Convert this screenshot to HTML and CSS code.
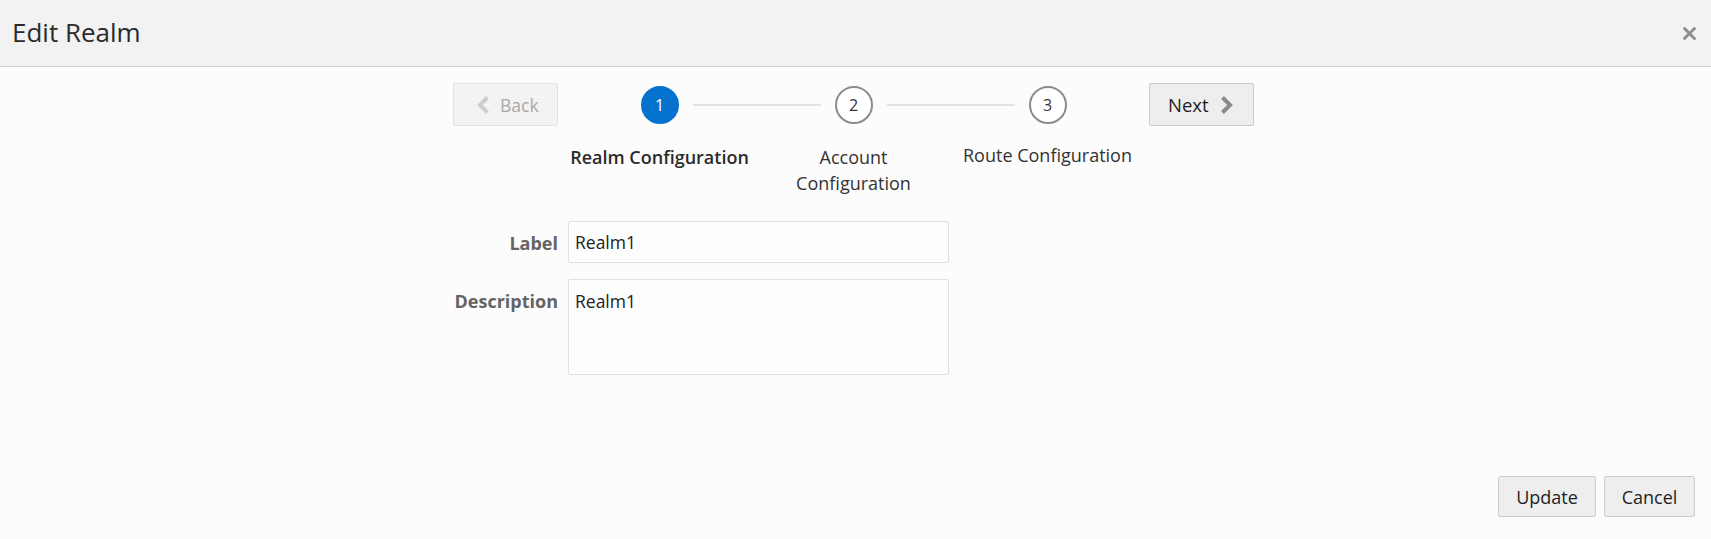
FILE: index.html
```html
<!DOCTYPE html>
<html lang="en">
<head>
<meta charset="utf-8">
<title>Edit Realm</title>
<link rel="stylesheet" href="styles.css">
</head>
<body>
<div class="dialog">
  <header class="hdr">
    <h1 class="hdr-title">Edit Realm</h1>
    <button class="close" aria-label="Close">
      <svg width="13" height="13" viewBox="0 0 13 13"><path d="M1.6 1.6 L11.4 11.4 M11.4 1.6 L1.6 11.4" stroke="#8c8c8c" stroke-width="2.8" stroke-linecap="square" fill="none"/></svg>
    </button>
  </header>
  <main class="content">
    <div class="wrap">
      <div class="train-row">
        <button class="btn btn-nav btn-disabled">
          <svg class="chev" width="14" height="20" viewBox="0 0 14 20"><polyline points="11.5,2.5 4,10 11.5,17.5" stroke="#cdcdcd" stroke-width="4" fill="none"/></svg>
          <span>Back</span>
        </button>
        <ol class="train">
          <li class="step current">
            <div class="track"><span class="seg seg-l none"></span><span class="circle">1</span><span class="seg seg-r"></span></div>
            <div class="step-label">Realm Configuration</div>
          </li>
          <li class="step">
            <div class="track"><span class="seg seg-l"></span><span class="circle">2</span><span class="seg seg-r"></span></div>
            <div class="step-label">Account Configuration</div>
          </li>
          <li class="step">
            <div class="track"><span class="seg seg-l"></span><span class="circle">3</span><span class="seg seg-r none"></span></div>
            <div class="step-label step-label-up">Route Configuration</div>
          </li>
        </ol>
        <button class="btn btn-nav btn-next">
          <span>Next</span>
          <svg class="chev" width="14" height="20" viewBox="0 0 14 20"><polyline points="2.5,2.5 10,10 2.5,17.5" stroke="#8a8a8a" stroke-width="4" fill="none"/></svg>
        </button>
      </div>
      <form class="form">
        <label class="f-label" for="lbl">Label</label>
        <input class="f-input" id="lbl" type="text" value="Realm1">
        <label class="f-label" for="desc">Description</label>
        <textarea class="f-input f-area" id="desc">Realm1</textarea>
      </form>
    </div>
  </main>
  <footer class="ftr">
    <button class="btn btn-foot btn-update">Update</button>
    <button class="btn btn-foot btn-cancel">Cancel</button>
  </footer>
</div>
</body>
</html>
```

FILE: styles.css
```css
* { box-sizing: border-box; }
html, body { margin: 0; padding: 0; }
body {
  background: #fcfcfc;
  font-family: "Open Sans", "Noto Sans", sans-serif;
  color: #333333;
}
.dialog {
  height: 100vh;
  display: flex;
  flex-direction: column;
}
.hdr {
  height: 67px;
  background: #f2f2f2;
  border-bottom: 1px solid #cfcfcf;
  display: flex;
  align-items: center;
  justify-content: space-between;
  padding: 0 15px 0 12px;
}
.hdr-title {
  margin: 0;
  font-size: 26px;
  font-weight: 400;
  color: #2b2b2b;
  line-height: 1;
  padding-bottom: 2px;
}
.close {
  background: none;
  border: 0;
  padding: 0;
  width: 13px;
  height: 13px;
  display: flex;
  align-items: center;
  justify-content: center;
}
.content {
  flex: 1;
  padding: 16px 4px 0 0;
}
.wrap {
  width: 801px;
  margin: 0 auto;
}
.train-row {
  display: flex;
  align-items: flex-start;
  justify-content: space-between;
}
.btn {
  font-family: inherit;
  border-radius: 2px;
  cursor: pointer;
}
.btn-nav {
  width: 105px;
  height: 43px;
  display: flex;
  align-items: center;
  padding: 0;
}
.btn-disabled {
  background: #f3f3f3;
  border: 1px solid #e3e3e3;
  color: #a8a8a8;
  font-size: 17.5px;
  padding-left: 22px;
  gap: 10px;
}
.btn-next {
  background: #eeeeee;
  border: 1px solid #c9c9c9;
  color: #1f1f1f;
  font-size: 18.5px;
  padding-left: 18px;
  gap: 11px;
}
.train {
  list-style: none;
  margin: 0;
  padding: 0;
  display: flex;
}
.step {
  width: 194px;
  display: flex;
  flex-direction: column;
  align-items: center;
}
.track {
  width: 100%;
  height: 43px;
  display: flex;
  align-items: center;
}
.seg {
  flex: 1;
  height: 2px;
  background: #e3e3e3;
}
.seg-r { margin-left: 14px; }
.seg-l { margin-right: 14px; }
.seg.none { background: transparent; }
.circle {
  width: 38px;
  height: 38px;
  border-radius: 50%;
  border: 2px solid #8c8c8c;
  background: #ffffff;
  display: flex;
  align-items: center;
  justify-content: center;
  font-size: 16px;
  color: #333;
  flex: none;
}
.current .circle {
  background: #0572ce;
  border-color: #0572ce;
  color: #ffffff;
}
.step-label {
  margin-top: 18px;
  text-align: center;
  font-size: 18px;
  line-height: 26px;
  color: #333333;
  width: 130px;
}
.current .step-label {
  font-weight: 600;
  width: 194px;
  color: #2b2b2b;
}
.step-label-up {
  width: 194px;
  margin-top: 16px;
}
.form {
  margin-top: 25px;
  display: grid;
  grid-template-columns: 105px 381px;
  column-gap: 10px;
  row-gap: 16px;
  align-items: start;
}
.f-label {
  text-align: right;
  font-size: 18px;
  font-weight: 700;
  color: #646464;
  line-height: 26px;
  padding-top: 9px;
  white-space: nowrap;
}
.f-input {
  font-family: inherit;
  font-size: 17.5px;
  color: #222;
  background: #fdfdfd;
  border: 1px solid #e0e0e0;
  border-radius: 2px;
  height: 42px;
  padding: 0 6px;
  width: 381px;
  margin: 0;
  outline: none;
}
.f-area {
  height: 96px;
  padding-top: 8px;
  line-height: 26px;
  resize: none;
  display: block;
}
.ftr {
  display: flex;
  justify-content: flex-end;
  gap: 8px;
  padding: 0 16px 22px 0;
}
.btn-foot {
  height: 41px;
  background: #eeeeee;
  border: 1px solid #cccccc;
  color: #1f1f1f;
  font-size: 18px;
  padding: 0;
}
.btn-update { width: 98px; }
.btn-cancel { width: 91px; }
```
